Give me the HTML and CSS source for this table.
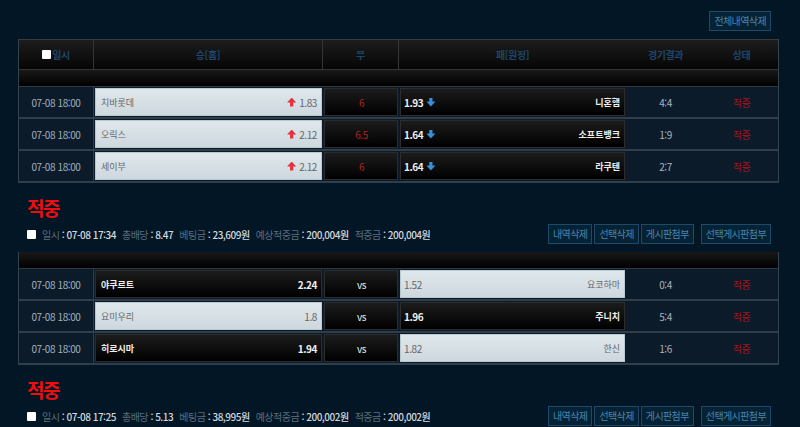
FILE: index.html
```html
<!DOCTYPE html>
<html lang="ko">
<head>
  <meta charset="UTF-8">
  <title>베팅내역</title>
  <link rel="stylesheet" href="styles.css">
</head>
<body>
<div class="wrap">

  <div class="top-bar">
    <button class="btn">전체내역삭제</button>
  </div>

  <!-- 첫번째 베팅 -->
  <div class="bet">
    <div class="grid head">
      <div class="h-cell sep"><span class="chk small"></span>일시</div>
      <div class="h-cell sep">승[홈]</div>
      <div class="h-cell sep">무</div>
      <div class="h-cell">패[원정]</div>
      <div class="h-cell">경기결과</div>
      <div class="h-cell">상태</div>
    </div>
    <div class="spacer"></div>

    <div class="grid row">
      <div class="date">07-08 18:00</div>
      <div class="odd light home"><span class="team">치바롯데</span><span class="num"><i class="up"></i>1.83</span></div>
      <div class="odd dark draw red">6</div>
      <div class="odd dark away"><span class="num">1.93<i class="down"></i></span><span class="team">니혼햄</span></div>
      <div class="score">4:4</div>
      <div class="state">적중</div>
    </div>
    <div class="grid row">
      <div class="date">07-08 18:00</div>
      <div class="odd light home"><span class="team">오릭스</span><span class="num"><i class="up"></i>2.12</span></div>
      <div class="odd dark draw red">6.5</div>
      <div class="odd dark away"><span class="num">1.64<i class="down"></i></span><span class="team">소프트뱅크</span></div>
      <div class="score">1:9</div>
      <div class="state">적중</div>
    </div>
    <div class="grid row">
      <div class="date">07-08 18:00</div>
      <div class="odd light home"><span class="team">세이부</span><span class="num"><i class="up"></i>2.12</span></div>
      <div class="odd dark draw red">6</div>
      <div class="odd dark away"><span class="num">1.64<i class="down"></i></span><span class="team">라쿠텐</span></div>
      <div class="score">2:7</div>
      <div class="state">적중</div>
    </div>
  </div>

  <div class="result">
    <div class="hit">적중</div>
    <div class="info">
      <div class="summary">
        <span class="chk"></span>
        <span class="item"><span class="lbl">일시</span> : 07-08 17:34</span>
        <span class="item"><span class="lbl">총배당</span> : 8.47</span>
        <span class="item"><span class="lbl">베팅금</span> : 23,609원</span>
        <span class="item"><span class="lbl">예상적중금</span> : 200,004원</span>
        <span class="item"><span class="lbl">적중금</span> : 200,004원</span>
      </div>
      <div class="actions">
        <button class="btn">내역삭제</button>
        <button class="btn">선택삭제</button>
        <button class="btn">게시판첨부</button>
        <button class="btn wide">선택게시판첨부</button>
      </div>
    </div>
  </div>

  <!-- 두번째 베팅 -->
  <div class="bet">
    <div class="spacer"></div>

    <div class="grid row">
      <div class="date">07-08 18:00</div>
      <div class="odd dark home"><span class="team">야쿠르트</span><span class="num">2.24</span></div>
      <div class="odd dark draw">vs</div>
      <div class="odd light away"><span class="num">1.52</span><span class="team">요코하마</span></div>
      <div class="score">0:4</div>
      <div class="state">적중</div>
    </div>
    <div class="grid row">
      <div class="date">07-08 18:00</div>
      <div class="odd light home"><span class="team">요미우리</span><span class="num">1.8</span></div>
      <div class="odd dark draw">vs</div>
      <div class="odd dark away"><span class="num">1.96</span><span class="team">주니치</span></div>
      <div class="score">5:4</div>
      <div class="state">적중</div>
    </div>
    <div class="grid row">
      <div class="date">07-08 18:00</div>
      <div class="odd dark home"><span class="team">히로시마</span><span class="num">1.94</span></div>
      <div class="odd dark draw">vs</div>
      <div class="odd light away"><span class="num">1.82</span><span class="team">한신</span></div>
      <div class="score">1:6</div>
      <div class="state">적중</div>
    </div>
  </div>

  <div class="result">
    <div class="hit">적중</div>
    <div class="info">
      <div class="summary">
        <span class="chk"></span>
        <span class="item"><span class="lbl">일시</span> : 07-08 17:25</span>
        <span class="item"><span class="lbl">총배당</span> : 5.13</span>
        <span class="item"><span class="lbl">베팅금</span> : 38,995원</span>
        <span class="item"><span class="lbl">예상적중금</span> : 200,002원</span>
        <span class="item"><span class="lbl">적중금</span> : 200,002원</span>
      </div>
      <div class="actions">
        <button class="btn">내역삭제</button>
        <button class="btn">선택삭제</button>
        <button class="btn">게시판첨부</button>
        <button class="btn wide">선택게시판첨부</button>
      </div>
    </div>
  </div>

</div>
</body>
</html>
```

FILE: styles.css
```css
body {
  margin: 0;
  background: #021626;
  font-family: "Noto Sans CJK KR", "Liberation Sans", sans-serif;
  font-size: 10px;
  letter-spacing: -0.4px;
  overflow: hidden;
}
.wrap {
  width: 761px;
  margin-left: 18px;
  padding-top: 11px;
}

/* 버튼 */
.btn {
  height: 20px;
  padding: 0 4px;
  background: #062235;
  border: 1px solid #1d4a68;
  color: #4a86ad;
  font-family: inherit;
  font-size: 10px;
  letter-spacing: -0.6px;
  line-height: 18px;
  cursor: pointer;
}
.top-bar {
  display: flex;
  justify-content: flex-end;
  padding-right: 8px;
  margin-bottom: 8px;
}

/* 테이블 */
.bet {
  border-left: 1px solid #34424e;
  border-right: 1px solid #34424e;
}
.grid {
  display: grid;
  grid-template-columns: 75px 229px 76px 227px 79px 73px;
}
.head {
  height: 29px;
  border-top: 1px solid #3a3a3a;
  border-bottom: 1px solid #333;
  background: linear-gradient(#1d1d1d, #050505);
}
.h-cell {
  display: flex;
  align-items: center;
  justify-content: center;
  color: #1d4668;
  font-weight: bold;
}
.h-cell.sep {
  border-right: 1px solid #353535;
}
.spacer {
  height: 16px;
  background: linear-gradient(#181818, #000);
  border-bottom: 1px solid #2c3a46;
}
.row {
  padding: 1px 0;
  height: 28px;
  background: #0b1b2a;
  border-bottom: 2px solid #2f3e4a;
}
.date, .score, .state {
  display: flex;
  align-items: center;
  justify-content: center;
}
.date {
  color: #a3b0ba;
  border-right: 1px solid #2f3e4a;
  margin: -1px 0;
}
.score {
  color: #a9b6c0;
}
.state {
  color: #a5141d;
}

/* 배당 셀 */
.odd {
  display: flex;
  align-items: center;
  justify-content: space-between;
  margin: 0 1px;
  padding: 0 4px 0 5px;
  box-sizing: border-box;
}
.light {
  background: linear-gradient(#dfe7eb, #cdd8de);
  border: 1px solid #b9c7cf;
  color: #666;
}
.dark {
  background: linear-gradient(#1c1c1c, #000);
  border: 1px solid #2c2c2c;
  color: #eee;
  font-weight: bold;
}
.draw {
  justify-content: center;
  font-weight: normal;
}
.draw.red {
  color: #b3212a;
}
.away {
  padding: 0 4px 0 3px;
}
.team {
  font-size: 9px;
  letter-spacing: 0;
}
.num {
  display: flex;
  align-items: center;
}
.up, .down {
  display: inline-block;
  width: 9px;
  height: 9px;
  margin: 0 3px;
}
.up {
  background: #e5323c;
  clip-path: polygon(50% 0, 100% 55%, 68% 55%, 68% 100%, 32% 100%, 32% 55%, 0 55%);
}
.down {
  background: #3a8fd6;
  clip-path: polygon(32% 0, 68% 0, 68% 45%, 100% 45%, 50% 100%, 0 45%, 32% 45%);
}

/* 결과 */
.result {
  padding: 13px 8px 8px 9px;
}
.hit {
  color: #f00d0d;
  font-size: 19px;
  font-weight: bold;
  letter-spacing: -1.5px;
  line-height: 24px;
}
.info {
  display: flex;
  justify-content: space-between;
  align-items: center;
  margin-top: 4px;
}
.summary {
  display: flex;
  align-items: center;
  color: #d3d8dd;
  font-weight: 500;
  letter-spacing: -0.5px;
}
.chk {
  display: inline-block;
  width: 9px;
  height: 9px;
  background: #fff;
  border-radius: 1px;
  margin-right: 6px;
}
.chk.small {
  margin-right: 1px;
}
.item {
  margin-right: 6px;
}
.lbl {
  color: #5c6e7d;
  font-weight: normal;
}
.actions {
  display: flex;
  gap: 2px;
}
.actions .wide {
  margin-left: 5px;
}
```
